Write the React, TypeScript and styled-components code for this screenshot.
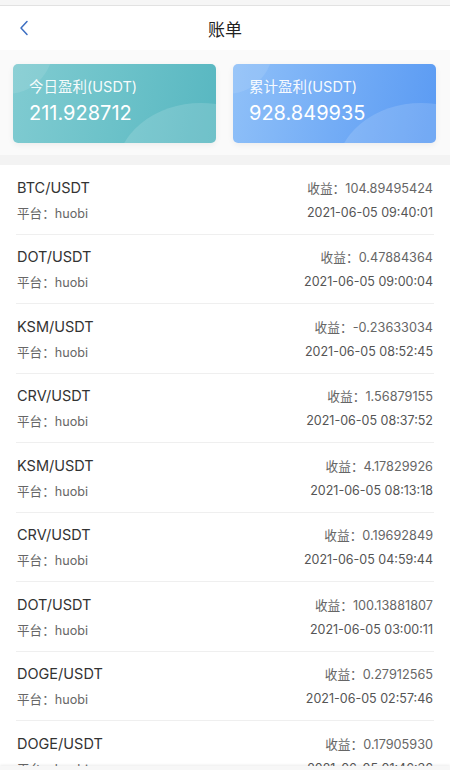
import React from "react";
import styled, { createGlobalStyle } from "styled-components";

const GlobalStyle = createGlobalStyle`
  html, body {
    margin: 0;
    padding: 0;
    background: #ffffff;
  }
  body {
    font-family: "Inter", "Noto Sans CJK SC", sans-serif;
    -webkit-font-smoothing: antialiased;
  }
  * { box-sizing: border-box; }
`;

const bills = [
  { pair: "BTC/USDT", profit: "104.89495424", time: "2021-06-05 09:40:01" },
  { pair: "DOT/USDT", profit: "0.47884364", time: "2021-06-05 09:00:04" },
  { pair: "KSM/USDT", profit: "-0.23633034", time: "2021-06-05 08:52:45" },
  { pair: "CRV/USDT", profit: "1.56879155", time: "2021-06-05 08:37:52" },
  { pair: "KSM/USDT", profit: "4.17829926", time: "2021-06-05 08:13:18" },
  { pair: "CRV/USDT", profit: "0.19692849", time: "2021-06-05 04:59:44" },
  { pair: "DOT/USDT", profit: "100.13881807", time: "2021-06-05 03:00:11" },
  { pair: "DOGE/USDT", profit: "0.27912565", time: "2021-06-05 02:57:46" },
  { pair: "DOGE/USDT", profit: "0.17905930", time: "2021-06-05 01:46:36" },
];

export default function App() {
  return (
    <Page>
      <GlobalStyle />
      <StatusStrip />
      <Header>
        <BackButton aria-label="back">
          <svg width="10" height="16" viewBox="0 0 10 16">
            <polyline points="8,1.5 2,8 8,14.5" fill="none" stroke="#3d6fc2" strokeWidth="1.5" strokeLinecap="round" strokeLinejoin="round" />
          </svg>
        </BackButton>
        <Title>账单</Title>
      </Header>
      <Summary>
        <StatCard $variant="teal">
          <StatLabel>今日盈利(USDT)</StatLabel>
          <StatValue>211.928712</StatValue>
        </StatCard>
        <StatCard $variant="blue">
          <StatLabel>累计盈利(USDT)</StatLabel>
          <StatValue>928.849935</StatValue>
        </StatCard>
      </Summary>
      <Divider />
      <List>
        {bills.map((b, i) => (
          <Row key={i}>
            <Line>
              <Pair>{b.pair}</Pair>
              <Profit>收益：{b.profit}</Profit>
            </Line>
            <Line>
              <Platform>平台：huobi</Platform>
              <Time>{b.time}</Time>
            </Line>
          </Row>
        ))}
      </List>
      <BottomBar />
    </Page>
  );
}

const Page = styled.div`
  width: 450px;
  min-height: 770px;
  background: #ffffff;
`;

const StatusStrip = styled.div`
  height: 6px;
  background: #f6f6f6;
  border-bottom: 1px solid #e2e2e2;
`;

const Header = styled.div`
  position: relative;
  height: 44px;
  display: flex;
  align-items: center;
  justify-content: center;
  background: #ffffff;
`;

const BackButton = styled.div`
  position: absolute;
  left: 19px;
  top: 14px;
  width: 10px;
  height: 16px;
  display: flex;
`;

const Title = styled.div`
  font-size: 17px;
  color: #222222;
  font-family: "Noto Sans CJK SC", sans-serif;
  margin-top: 1px;
`;

const Summary = styled.div`
  display: flex;
  gap: 17px;
  padding: 14px 14px 12px 13px;
  background: #fafafa;
`;

const StatCard = styled.div<{ $variant: "teal" | "blue" }>`
  position: relative;
  overflow: hidden;
  flex: 1;
  height: 79px;
  border-radius: 5px;
  padding: 13px 16px 0 16px;
  color: #ffffff;
  background: ${(p) =>
    p.$variant === "teal"
      ? "linear-gradient(100deg, #80cbd1 0%, #6cc2c9 50%, #58b7c1 100%)"
      : "linear-gradient(100deg, #8fc0f8 0%, #74adf6 50%, #5b9bf3 100%)"};
  box-shadow: 0 2px 6px rgba(0, 0, 0, 0.06);

  &::before {
    content: "";
    position: absolute;
    left: -52px;
    top: -62px;
    width: 92px;
    height: 92px;
    border-radius: 50%;
    background: rgba(255, 255, 255, 0.1);
  }

  &::after {
    content: "";
    position: absolute;
    right: -70px;
    bottom: -100px;
    width: 170px;
    height: 140px;
    border-radius: 50%;
    background: rgba(255, 255, 255, 0.14);
  }
`;

const StatLabel = styled.div`
  position: relative;
  z-index: 1;
  font-size: 14.5px;
  line-height: 20px;
  color: rgba(255, 255, 255, 0.95);
`;

const StatValue = styled.div`
  position: relative;
  z-index: 1;
  margin-top: 3px;
  font-size: 20px;
  line-height: 26px;
  font-weight: 400;
`;

const Divider = styled.div`
  height: 10px;
  background: #f3f3f3;
`;

const List = styled.div`
  padding: 0 16px;
`;

const Row = styled.div`
  display: flex;
  flex-direction: column;
  gap: 5px;
  padding: 12px 1px 11.5px 1px;
  border-bottom: 1px solid #efefef;
`;

const Line = styled.div`
  display: flex;
  align-items: center;
  justify-content: space-between;
  height: 20px;
`;

const Pair = styled.span`
  font-size: 14.5px;
  color: #333333;
`;

const Platform = styled.span`
  font-size: 12.6px;
  color: #666666;
`;

const Profit = styled.span`
  font-size: 12.7px;
  color: #666666;
`;

const Time = styled.span`
  font-size: 12.5px;
  color: #555555;
`;

const BottomBar = styled.div`
  position: fixed;
  left: 0;
  right: 0;
  bottom: 0;
  height: 4px;
  background: #f7f7f7;
  box-shadow: 0 -1px 3px rgba(0, 0, 0, 0.08);
`;
